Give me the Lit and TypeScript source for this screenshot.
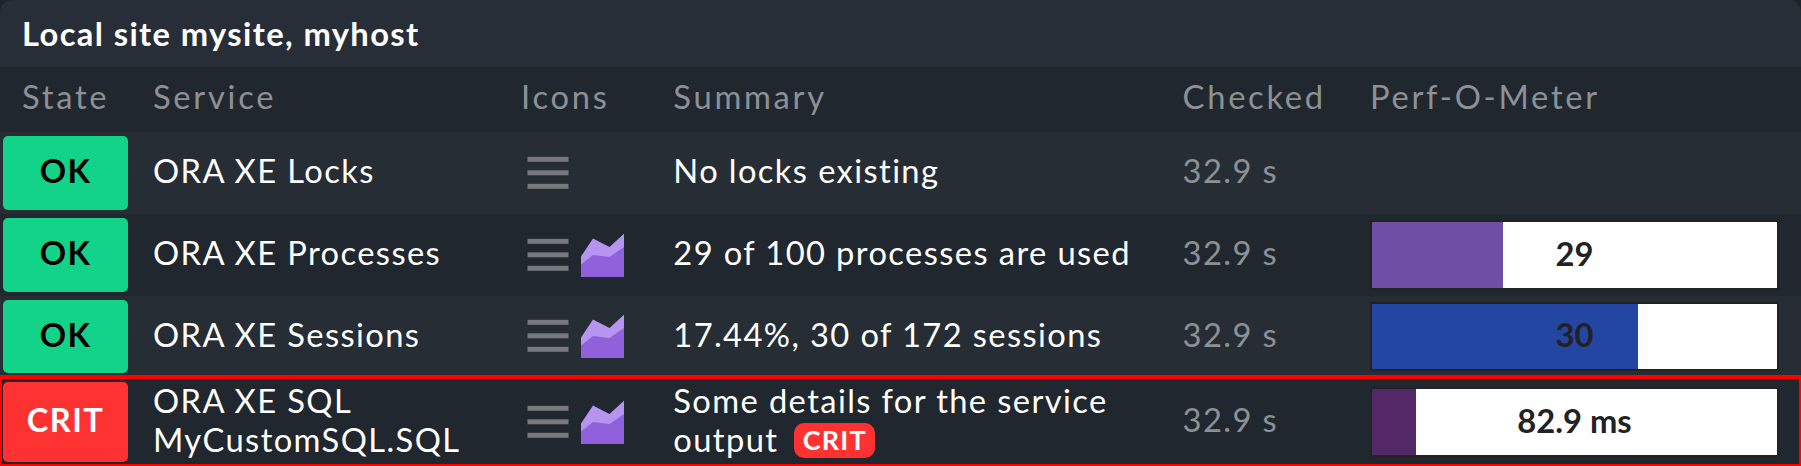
import { LitElement, html, css, svg, nothing } from "lit";
import { customElement, property } from "lit/decorators.js";

interface Perf {
  label: string;
  width: number;
  color: string;
}

interface Service {
  state: "OK" | "CRIT";
  name: string[];
  summary: string[];
  marker?: string;
  checked: string;
  perf?: Perf;
}

const SERVICES: Service[] = [
  { state: "OK", name: ["ORA XE Locks"], summary: ["No locks existing"], checked: "32.9 s" },
  {
    state: "OK",
    name: ["ORA XE Processes"],
    summary: ["29 of 100 processes are used"],
    checked: "32.9 s",
    perf: { label: "29", width: 32.35, color: "#6f4ea5" },
  },
  {
    state: "OK",
    name: ["ORA XE Sessions"],
    summary: ["17.44%, 30 of 172 sessions"],
    checked: "32.9 s",
    perf: { label: "30", width: 65.68, color: "#2346a3" },
  },
  {
    state: "CRIT",
    name: ["ORA XE SQL", "MyCustomSQL.SQL"],
    summary: ["Some details for the service", "output"],
    marker: "CRIT",
    checked: "32.9 s",
    perf: { label: "82.9 ms", width: 10.86, color: "#522966" },
  },
];

@customElement("perf-meter")
export class PerfMeter extends LitElement {
  @property({ attribute: false }) perf!: Perf;

  static styles = css`
    :host {
      display: block;
      width: 409px;
      height: 100%;
    }
    .frame {
      box-sizing: border-box;
      height: 100%;
      border: 2px solid #222;
      background: #fff;
      display: grid;
    }
    .fill,
    .label {
      grid-area: 1 / 1;
    }
    .label {
      display: flex;
      align-items: center;
      justify-content: center;
      padding-bottom: 4px;
      color: #222;
      font-weight: 700;
      letter-spacing: 0;
      line-height: 39px;
    }
  `;

  render() {
    const p = this.perf;
    return html`<div class="frame">
      <div class="fill" style="width:${p.width}%;background:${p.color}"></div>
      <div class="label">${p.label}</div>
    </div>`;
  }
}

@customElement("app-root")
export class AppRoot extends LitElement {
  static styles = css`
    :host {
      display: block;
      height: 466px;
      overflow: hidden;
      background: #1e222b;
      color: #fff;
      font: 32.7px/39px Lato, sans-serif;
      letter-spacing: 1.39px;
      white-space: nowrap;
    }
    .title {
      box-sizing: border-box;
      height: 67px;
      padding: 14px 22px 0;
      border-radius: 12px 12px 0 0;
      background: #282e38;
      font-weight: 700;
    }
    .row {
      box-sizing: border-box;
      display: grid;
      grid-template-columns: 153px 368px 152.300px 509.300px 187.400px 409px;
      align-items: center;
      height: 82px;
      background: #262d34;
    }
    .row.odd {
      background: #21272e;
    }
    .row.third {
      height: 79px;
      padding-top: 2px;
    }
    .row.problem {
      height: 91px;
      padding-top: 1px;
      border: solid #f00;
      border-width: 4px 2px 2px;
      grid-template-columns: 151px 368px 152.300px 509.300px 187.400px 409px;
    }
    .row.head {
      height: 65px;
      padding-bottom: 7px;
      color: #8d9196;
      background: #21272e;
      letter-spacing: 2.73px;
    }
    .head .state-title {
      padding-left: 22px;
    }
    .state {
      box-sizing: border-box;
      width: 125px;
      height: 74px;
      margin-left: 3px;
      border-radius: 5px;
      background: #13d389;
      color: #000;
      font-weight: 700;
      text-align: center;
      padding-top: 15px;
    }
    .third .state {
      height: 73px;
    }
    .problem .state {
      height: 80px;
      margin-left: 1px;
      background: #ff3232;
      color: #fff;
      padding-top: 18px;
    }
    .text {
      padding-bottom: 5px;
    }
    .third .text {
      padding-bottom: 4px;
    }
    .checked {
      color: #8d9196;
    }
    .icons {
      display: flex;
      align-items: center;
      height: 44px;
      padding-left: 6px;
      gap: 12px;
    }
    .third .icons {
      padding-bottom: 2px;
    }
    .burger {
      width: 42px;
      height: 44px;
    }
    .graph {
      width: 43px;
      height: 44px;
    }
    .meter {
      height: 70px;
    }
    .third .meter {
      height: 69px;
    }
    .marker {
      display: inline-block;
      margin-left: 6px;
      padding: 0 8px 0 8.500px;
      height: 35px;
      border-radius: 10px;
      background: #ff3232;
      font-size: 27px;
      line-height: 34px;
      font-weight: 700;
      letter-spacing: 1.2px;
      vertical-align: 1.800px;
    }
  `;

  private icons(withGraph: boolean) {
    return html`<div class="icons">
      <svg class="burger" viewBox="0 0 42 44">
        ${[5.8, 19.3, 32.8].map((y) => svg`<rect x="0.5" y=${y} width="41" height="5" fill="#77797c" />`)}
      </svg>
      ${withGraph
        ? html`<svg class="graph" viewBox="0 0 43 44">
            <path d="M0 23.500 12 5.500 28.500 14 43 .800V44H0z" fill="#b794f0" />
            <path d="M0 31.500 12 22 28.500 24 43 14V44H0z" fill="#9160db" />
          </svg>`
        : nothing}
    </div>`;
  }

  private row(s: Service, i: number) {
    const cls = ["row", i % 2 ? "odd" : "", i === 2 ? "third" : "", s.state === "CRIT" ? "problem" : ""].join(" ");
    return html`<div class=${cls}>
      <div class="state">${s.state}</div>
      <div class="text">${s.name.map((l) => html`<div>${l}</div>`)}</div>
      ${this.icons(!!s.perf)}
      <div class="text">
        ${s.summary.map(
          (l, n) =>
            html`<div>${l}${s.marker && n === s.summary.length - 1 ? html` <span class="marker">${s.marker}</span>` : nothing}</div>`
        )}
      </div>
      <div class="text checked">${s.checked}</div>
      ${s.perf ? html`<perf-meter class="meter" .perf=${s.perf}></perf-meter>` : nothing}
    </div>`;
  }

  render() {
    return html`
      <div class="title">Local site mysite, myhost</div>
      <div class="row head">
        <div class="state-title">State</div>
        <div>Service</div>
        <div>Icons</div>
        <div>Summary</div>
        <div>Checked</div>
        <div>Perf-O-Meter</div>
      </div>
      ${SERVICES.map((s, i) => this.row(s, i))}
    `;
  }
}
